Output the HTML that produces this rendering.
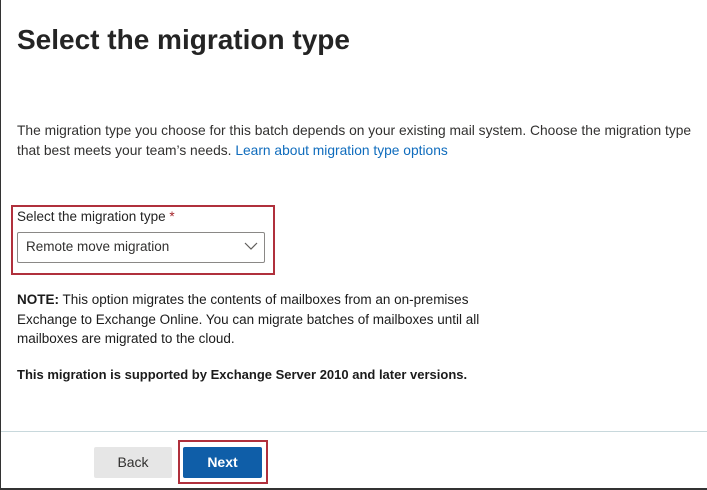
<!DOCTYPE html><html><head><style>
body{margin:0;width:707px;height:490px;background:#fff;font-family:"Liberation Sans",sans-serif;color:#323130;position:relative;overflow:hidden}
.a{position:absolute}
</style></head><body>
<div class="a" style="left:0;top:0;width:1px;height:490px;background:#333"></div>
<div class="a" style="left:0;top:488px;width:707px;height:2px;background:#333"></div>
<div class="a" style="left:17px;top:24px;font-size:28px;font-weight:bold;color:#242424">Select the migration type</div>
<div class="a" style="left:17px;top:121px;width:690px;font-size:13.8px;line-height:20px;color:#323130">The migration type you choose for this batch depends on your existing mail system. Choose the migration type that best meets your team’s needs. <span style="color:#0f6cbd">Learn about migration type options</span></div>
<div class="a" style="left:11px;top:205px;width:260px;height:66px;border:2px solid #b0303c"></div>
<div class="a" style="left:17px;top:209px;font-size:13.5px;color:#242424">Select the migration type <span style="color:#a4262c">*</span></div>
<div class="a" style="left:17px;top:232px;width:246px;height:29px;border:1px solid #8a8886;border-radius:2px"></div>
<div class="a" style="left:26px;top:239px;font-size:13.5px;color:#323130">Remote move migration</div>
<svg class="a" style="left:244px;top:242px" width="14" height="9"><path d="M1 1 L7 7 L13 1" fill="none" stroke="#605e5c" stroke-width="1.2"/></svg>
<div class="a" style="left:17px;top:290px;font-size:13.5px;line-height:19.5px;color:#1b1b1b;width:500px"><b>NOTE:</b> This option migrates the contents of mailboxes from an on-premises Exchange to Exchange Online. You can migrate batches of mailboxes until all mailboxes are migrated to the cloud.</div>
<div class="a" style="left:17px;top:367px;font-size:13px;font-weight:bold;color:#1b1b1b">This migration is supported by Exchange Server 2010 and later versions.</div>
<div class="a" style="left:1px;top:431px;width:706px;height:1px;background:#c8d8dc"></div>
<div class="a" style="left:94px;top:447px;width:78px;height:31px;background:#e6e6e6;border-radius:2px;font-size:14px;line-height:31px;text-align:center;color:#323130">Back</div>
<div class="a" style="left:178px;top:440px;width:86px;height:40px;border:2px solid #b0303c"></div>
<div class="a" style="left:183px;top:447px;width:79px;height:31px;background:#0f5ea8;border-radius:2px;font-size:14px;font-weight:bold;line-height:31px;text-align:center;color:#fff">Next</div>
</body></html>
